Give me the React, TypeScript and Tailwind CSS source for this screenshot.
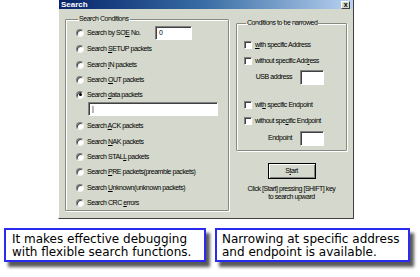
import React from "react";

type Opt = { pre: string; key: string; post: string; h: string; checked?: boolean };

function Label({ pre, k, post }: { pre: string; k: string; post: string }) {
  return (
    <span className="whitespace-nowrap">
      {pre}
      <span className="underline underline-offset-1">{k}</span>
      {post}
    </span>
  );
}

function Radio({ checked }: { checked?: boolean }) {
  return (
    <span className="w-[8px] h-[8px] rounded-full bg-white border border-t-[#808080] border-l-[#808080] border-r-[#f4f4f4] border-b-[#f4f4f4] shadow-[inset_1px_1px_0_#404040] flex items-center justify-center shrink-0">
      {checked && <span className="w-[3px] h-[3px] rounded-full bg-black" />}
    </span>
  );
}

function Check() {
  return (
    <span className="w-[8px] h-[8px] bg-white border border-t-[#808080] border-l-[#808080] border-r-white border-b-white shadow-[inset_1px_1px_0_#404040] shrink-0" />
  );
}

function TextBox({ w, h, value }: { w: string; h: string; value?: string }) {
  return (
    <div
      className={`${w} ${h} bg-white border border-t-[#808080] border-l-[#808080] border-r-white border-b-white shadow-[inset_1px_1px_0_#404040] flex items-center pl-[3px] text-[7px]`}
    >
      {value}
    </div>
  );
}

const topRows: Opt[] = [
  { pre: "Search by SO", key: "E", post: " No.", h: "h-[16px]" },
  { pre: "Search ", key: "S", post: "ETUP packets", h: "h-[16px]" },
  { pre: "Search ", key: "I", post: "N packets", h: "h-[15px]" },
  { pre: "Search ", key: "O", post: "UT packets", h: "h-[15px]" },
  { pre: "Search ", key: "d", post: "ata packets", h: "h-[15px]", checked: true },
];

const bottomRows: Opt[] = [
  { pre: "Search ", key: "A", post: "CK packets", h: "h-[16px]" },
  { pre: "Search ", key: "N", post: "AK packets", h: "h-[16px]" },
  { pre: "Search STAL", key: "L", post: " packets", h: "h-[13px]" },
  { pre: "Search ", key: "P", post: "RE packets(preamble packets)", h: "h-[17px]" },
  { pre: "Search ", key: "U", post: "nknown(unknown packets)", h: "h-[15px]" },
  { pre: "Search CRC ", key: "e", post: "rrors", h: "h-[15px]" },
];

function RadioRow({ o }: { o: Opt }) {
  return (
    <div className={`${o.h} flex items-center gap-[3px]`}>
      <Radio checked={o.checked} />
      <Label pre={o.pre} k={o.key} post={o.post} />
    </div>
  );
}

const groupBox =
  "border border-[#8a8a84] shadow-[inset_1px_1px_0_#ffffff,1px_1px_0_#ffffff] rounded-[1px]";

export default function App() {
  return (
    <div className="w-[420px] h-[277px] bg-white overflow-hidden [font-family:'Liberation_Sans',Arial,sans-serif]">
      {/* dialog */}
      <div className="ml-[58px] w-[296px] h-[219px] bg-[#d5d8cc] border-l border-l-white border-r border-r-[#404040] border-b border-b-[#404040] flex flex-col text-[7px] leading-[8px] tracking-[-0.45px] text-black">
        <div className="h-[9px] bg-gradient-to-r from-[#0a246a] via-[#3a6ea5] to-[#b8d2f0] flex items-center justify-between pl-[2px] pr-[3px]">
          <span className="text-white font-bold text-[8px] leading-[8px] tracking-normal">Search</span>
          <span className="w-[9px] h-[8px] bg-[#d5d8cc] border border-t-white border-l-white border-r-[#404040] border-b-[#404040] flex items-center justify-center text-[7px] leading-[6px] font-bold">
            x
          </span>
        </div>

        <div className="flex gap-[7px] pl-[6px] pt-[6px]">
          {/* left group */}
          <fieldset className={`${groupBox} w-[163px] h-[196px] px-[10px] pt-[2px] pb-0 m-0`}>
            <legend className="ml-[2px] px-[1px] leading-[8px]">Search Conditions</legend>
            <div className="flex flex-col">
              <div className="flex items-center">
                <div className="w-[79px]">
                  <RadioRow o={topRows[0]} />
                </div>
                <TextBox w="w-[37px]" h="h-[14px]" value="0" />
              </div>
              {topRows.slice(1).map((o) => (
                <RadioRow key={o.post} o={o} />
              ))}
              <div className="h-[16px] pl-[12px]">
                <TextBox w="w-[130px]" h="h-[14px]" value="|" />
              </div>
              {bottomRows.map((o) => (
                <RadioRow key={o.post} o={o} />
              ))}
            </div>
          </fieldset>

          {/* right column */}
          <div className="flex flex-col items-center pt-[4px]">
            <fieldset className={`${groupBox} w-[111px] h-[132px] pl-[7px] pt-[10px] pb-0 m-0`}>
              <legend className="ml-[2px] px-[1px] leading-[8px]">Conditions to be narrowed</legend>
              <div className="flex flex-col">
                <div className="h-[16px] flex items-center gap-[3px]">
                  <Check />
                  <Label pre="" k="w" post="ith specific Address" />
                </div>
                <div className="h-[16px] flex items-center gap-[3px]">
                  <Check />
                  <Label pre="without specific Add" k="r" post="ess" />
                </div>
                <div className="h-[16px] flex items-center justify-end gap-[8px] pr-[22px]">
                  <span>USB address</span>
                  <TextBox w="w-[24px]" h="h-[15px]" />
                </div>
                <div className="h-[12px]" />
                <div className="h-[16px] flex items-center gap-[3px]">
                  <Check />
                  <Label pre="wit" k="h" post=" specific Endpoint" />
                </div>
                <div className="h-[16px] flex items-center gap-[3px]">
                  <Check />
                  <Label pre="without spe" k="c" post="ific Endpoint" />
                </div>
                <div className="h-[18px] flex items-center justify-end gap-[8px] pr-[22px]">
                  <span>Endpoint</span>
                  <TextBox w="w-[24px]" h="h-[15px]" />
                </div>
              </div>
            </fieldset>

            <button className="mt-[12px] w-[48px] h-[16px] bg-[#d5d8cc] border border-black shadow-[inset_1px_1px_0_#ffffff,inset_-1px_-1px_0_#808080] flex items-center justify-center">
              <Label pre="S" k="t" post="art" />
            </button>
            <p className="mt-[6px] text-center leading-[8px]">
              Click [Start] pressing [SHIFT] key
              <br />
              to search upward
            </p>
          </div>
        </div>
      </div>

      {/* callouts */}
      <div className="flex gap-[9px] ml-[4px] mt-[9px] [font-family:'DejaVu_Sans',sans-serif] text-[12px] leading-[13px] text-black">
        <div className="w-[202px] h-[34px] bg-white border-2 border-[#2a2af0] shadow-[4px_5px_3px_rgba(0,0,0,0.65)] pl-[6px] pt-[3px]">
          It makes effective debugging
          <br />
          with flexible search functions.
        </div>
        <div className="w-[195px] h-[34px] bg-white border-2 border-[#2a2af0] shadow-[4px_5px_3px_rgba(0,0,0,0.65)] pl-[5px] pt-[3px]">
          Narrowing at specific address
          <br />
          and endpoint is available.
        </div>
      </div>
    </div>
  );
}
